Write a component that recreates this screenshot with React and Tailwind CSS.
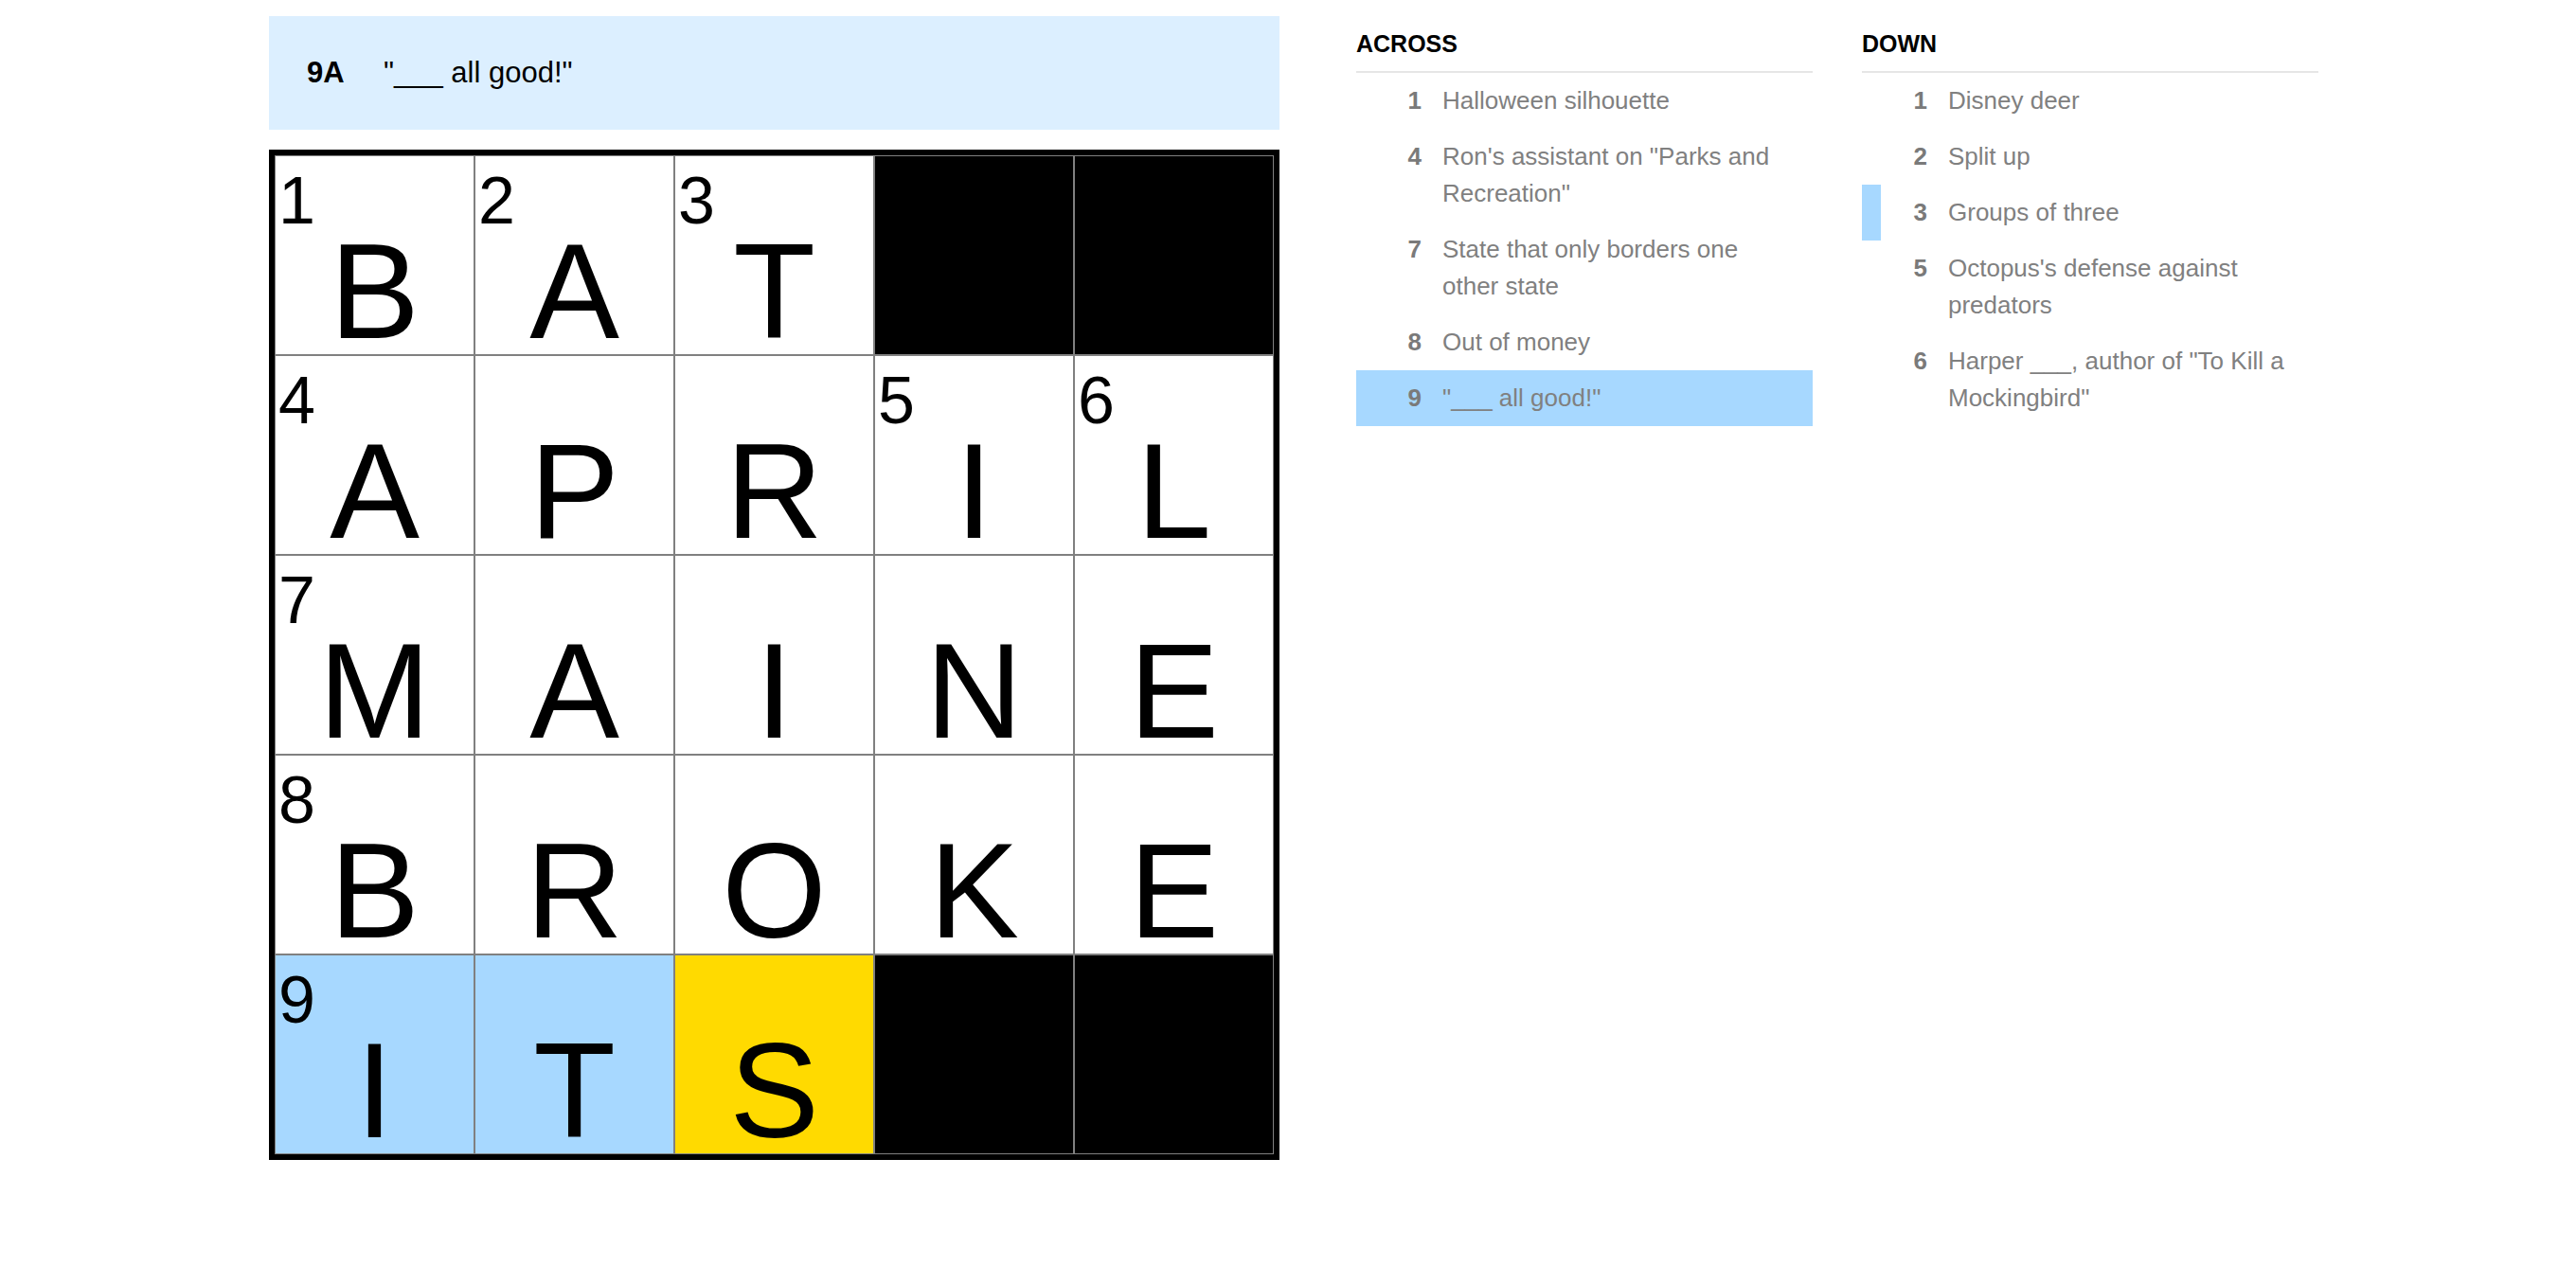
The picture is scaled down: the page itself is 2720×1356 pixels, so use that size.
import React from "react";

const FONT = { fontFamily: '"Liberation Sans", Arial, sans-serif' };

// "#" marks a black square
const GRID = [
  ["B", "A", "T", "#", "#"],
  ["A", "P", "R", "I", "L"],
  ["M", "A", "I", "N", "E"],
  ["B", "R", "O", "K", "E"],
  ["I", "T", "S", "#", "#"],
];

const NUMBERS = {
  "0-0": 1,
  "0-1": 2,
  "0-2": 3,
  "1-0": 4,
  "1-3": 5,
  "1-4": 6,
  "2-0": 7,
  "3-0": 8,
  "4-0": 9,
};

const ACROSS = [
  { n: 1, text: "Halloween silhouette" },
  { n: 4, text: 'Ron\'s assistant on "Parks and Recreation"' },
  { n: 7, text: "State that only borders one other state" },
  { n: 8, text: "Out of money" },
  { n: 9, text: '"___ all good!"', active: true },
];

const DOWN = [
  { n: 1, text: "Disney deer" },
  { n: 2, text: "Split up" },
  { n: 3, text: "Groups of three", related: true },
  { n: 5, text: "Octopus's defense against predators" },
  { n: 6, text: 'Harper ___, author of "To Kill a Mockingbird"' },
];

const selected = { row: 4, col: 2 };

function Cell({ r, c, value }) {
  const num = NUMBERS[`${r}-${c}`];
  if (value === "#") {
    return <div className="h-[211px] w-[211px] border border-[#808080] bg-black" />;
  }
  let bg = "bg-white";
  if (r === selected.row && c === selected.col) bg = "bg-[#ffda00]";
  else if (r === selected.row) bg = "bg-[#a7d8ff]";

  return (
    <div className={`relative flex h-[211px] w-[211px] justify-center border border-[#808080] pt-[72px] ${bg}`}>
      {num && (
        <span className="absolute left-[3px] top-[12px] text-[70px] leading-none text-black">
          {num}
        </span>
      )}
      <span className="text-[142px] leading-none text-black">{value}</span>
    </div>
  );
}

function ClueList({ title, clues }) {
  return (
    <section className="w-[482px]">
      <h2 className="border-b-2 border-[#e6e6e6] pb-[16px] pt-[17px] text-[25px] font-bold leading-[25px] text-black">
        {title}
      </h2>
      <ol>
        {clues.map((c) => (
          <li
            key={c.n}
            className={`flex border-l-[20px] py-[10px] pr-[26px] text-[26px] leading-[39px] text-[#808080] ${
              c.active
                ? "border-[#a7d8ff] bg-[#a7d8ff]"
                : c.related
                ? "border-[#a7d8ff]"
                : "border-transparent"
            }`}
          >
            <span className="w-[49px] shrink-0 text-right font-bold text-[#7a7a7a]">{c.n}</span>
            <span className="ml-[22px]">{c.text}</span>
          </li>
        ))}
      </ol>
    </section>
  );
}

export default function App() {
  return (
    <div className="min-h-screen bg-white" style={FONT}>
      <div className="flex pl-[284px] pt-[17px]">
        <div className="w-[1067px]">
          <div className="flex h-[120px] items-center bg-[#dcefff] pl-[40px] text-[31px] text-black">
            <span className="w-[81px] font-bold">9A</span>
            <span>"___ all good!"</span>
          </div>

          <div className="mt-[21px] grid w-[1067px] grid-cols-5 border-[6px] border-black">
            {GRID.map((row, r) =>
              row.map((v, c) => <Cell key={`${r}-${c}`} r={r} c={c} value={v} />)
            )}
          </div>
        </div>

        <div className="ml-[81px] flex gap-[52px]">
          <ClueList title="ACROSS" clues={ACROSS} />
          <ClueList title="DOWN" clues={DOWN} />
        </div>
      </div>
    </div>
  );
}
